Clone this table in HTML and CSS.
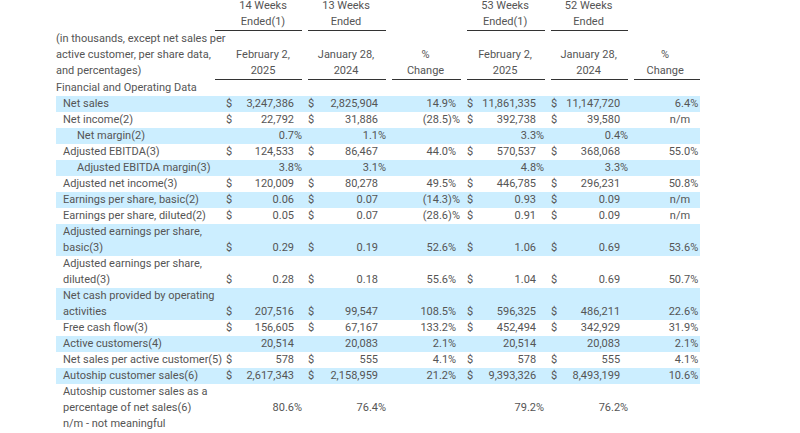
FILE: index.html
```html
<!DOCTYPE html>
<html>
<head>
<meta charset="utf-8">
<link rel="stylesheet" href="styles.css">
</head>
<body>
<div class="wrap">
<table class="fin">
  <colgroup>
    <col class="w-label">
    <col class="w-cur"><col class="w-v60"><col class="w-s10">
    <col class="w-cur"><col class="w-v62"><col class="w-s10">
    <col class="w-v60"><col class="w-s15">
    <col class="w-cur"><col class="w-v61"><col class="w-s11">
    <col class="w-cur"><col class="w-v61"><col class="w-s10">
    <col class="w-v60"><col class="w-s10">
  </colgroup>
  <tr>
    <td></td>
    <td colspan="3" class="hcell"><div class="htext">14 Weeks<br>Ended(1)</div><div class="hline first"></div></td>
    <td colspan="3" class="hcell"><div class="htext">13 Weeks<br>Ended</div><div class="hline"></div></td>
    <td colspan="2"></td>
    <td colspan="3" class="hcell"><div class="htext">53 Weeks<br>Ended(1)</div><div class="hline"></div></td>
    <td colspan="3" class="hcell"><div class="htext">52 Weeks<br>Ended</div><div class="hline"></div></td>
    <td colspan="2"></td>
  </tr>
  <tr>
    <td class="hlabel">(in thousands, except net sales per<br>active customer, per share data,<br>and percentages)</td>
    <td colspan="3" class="hcell"><div class="htext">February 2,<br>2025</div><div class="hline first"></div></td>
    <td colspan="3" class="hcell"><div class="htext">January 28,<br>2024</div><div class="hline"></div></td>
    <td colspan="2" class="hcell"><div class="htext">%<br>Change</div><div class="hline"></div></td>
    <td colspan="3" class="hcell"><div class="htext">February 2,<br>2025</div><div class="hline"></div></td>
    <td colspan="3" class="hcell"><div class="htext">January 28,<br>2024</div><div class="hline"></div></td>
    <td colspan="2" class="hcell"><div class="htext">%<br>Change</div><div class="hline last"></div></td>
  </tr>
  <tr>
    <td colspan="17" class="section">Financial and Operating Data</td>
  </tr>
  <tr class="band">
    <td class="lbl">Net sales</td>
    <td class="cur">$</td><td class="num">3,247,386</td><td class="suf"></td>
    <td class="cur">$</td><td class="num">2,825,904</td><td class="suf"></td>
    <td class="num">14.9</td><td class="suf">%</td>
    <td class="cur">$</td><td class="num">11,861,335</td><td class="suf"></td>
    <td class="cur">$</td><td class="num">11,147,720</td><td class="suf"></td>
    <td class="num">6.4</td><td class="suf">%</td>
  </tr>
  <tr>
    <td class="lbl">Net income(2)</td>
    <td class="cur">$</td><td class="num">22,792</td><td class="suf"></td>
    <td class="cur">$</td><td class="num">31,886</td><td class="suf"></td>
    <td class="num">(28.5</td><td class="suf">)%</td>
    <td class="cur">$</td><td class="num">392,738</td><td class="suf"></td>
    <td class="cur">$</td><td class="num">39,580</td><td class="suf"></td>
    <td class="num">n/m</td><td class="suf"></td>
  </tr>
  <tr class="band">
    <td class="lbl ind">Net margin(2)</td>
    <td class="cur"></td><td class="num">0.7</td><td class="suf">%</td>
    <td class="cur"></td><td class="num">1.1</td><td class="suf">%</td>
    <td class="num"></td><td class="suf"></td>
    <td class="cur"></td><td class="num">3.3</td><td class="suf">%</td>
    <td class="cur"></td><td class="num">0.4</td><td class="suf">%</td>
    <td class="num"></td><td class="suf"></td>
  </tr>
  <tr>
    <td class="lbl">Adjusted EBITDA(3)</td>
    <td class="cur">$</td><td class="num">124,533</td><td class="suf"></td>
    <td class="cur">$</td><td class="num">86,467</td><td class="suf"></td>
    <td class="num">44.0</td><td class="suf">%</td>
    <td class="cur">$</td><td class="num">570,537</td><td class="suf"></td>
    <td class="cur">$</td><td class="num">368,068</td><td class="suf"></td>
    <td class="num">55.0</td><td class="suf">%</td>
  </tr>
  <tr class="band">
    <td class="lbl ind">Adjusted EBITDA margin(3)</td>
    <td class="cur"></td><td class="num">3.8</td><td class="suf">%</td>
    <td class="cur"></td><td class="num">3.1</td><td class="suf">%</td>
    <td class="num"></td><td class="suf"></td>
    <td class="cur"></td><td class="num">4.8</td><td class="suf">%</td>
    <td class="cur"></td><td class="num">3.3</td><td class="suf">%</td>
    <td class="num"></td><td class="suf"></td>
  </tr>
  <tr>
    <td class="lbl">Adjusted net income(3)</td>
    <td class="cur">$</td><td class="num">120,009</td><td class="suf"></td>
    <td class="cur">$</td><td class="num">80,278</td><td class="suf"></td>
    <td class="num">49.5</td><td class="suf">%</td>
    <td class="cur">$</td><td class="num">446,785</td><td class="suf"></td>
    <td class="cur">$</td><td class="num">296,231</td><td class="suf"></td>
    <td class="num">50.8</td><td class="suf">%</td>
  </tr>
  <tr class="band">
    <td class="lbl">Earnings per share, basic(2)</td>
    <td class="cur">$</td><td class="num">0.06</td><td class="suf"></td>
    <td class="cur">$</td><td class="num">0.07</td><td class="suf"></td>
    <td class="num">(14.3</td><td class="suf">)%</td>
    <td class="cur">$</td><td class="num">0.93</td><td class="suf"></td>
    <td class="cur">$</td><td class="num">0.09</td><td class="suf"></td>
    <td class="num">n/m</td><td class="suf"></td>
  </tr>
  <tr>
    <td class="lbl">Earnings per share, diluted(2)</td>
    <td class="cur">$</td><td class="num">0.05</td><td class="suf"></td>
    <td class="cur">$</td><td class="num">0.07</td><td class="suf"></td>
    <td class="num">(28.6</td><td class="suf">)%</td>
    <td class="cur">$</td><td class="num">0.91</td><td class="suf"></td>
    <td class="cur">$</td><td class="num">0.09</td><td class="suf"></td>
    <td class="num">n/m</td><td class="suf"></td>
  </tr>
  <tr class="band">
    <td class="lbl">Adjusted earnings per share,<br>basic(3)</td>
    <td class="cur">$</td><td class="num">0.29</td><td class="suf"></td>
    <td class="cur">$</td><td class="num">0.19</td><td class="suf"></td>
    <td class="num">52.6</td><td class="suf">%</td>
    <td class="cur">$</td><td class="num">1.06</td><td class="suf"></td>
    <td class="cur">$</td><td class="num">0.69</td><td class="suf"></td>
    <td class="num">53.6</td><td class="suf">%</td>
  </tr>
  <tr>
    <td class="lbl">Adjusted earnings per share,<br>diluted(3)</td>
    <td class="cur">$</td><td class="num">0.28</td><td class="suf"></td>
    <td class="cur">$</td><td class="num">0.18</td><td class="suf"></td>
    <td class="num">55.6</td><td class="suf">%</td>
    <td class="cur">$</td><td class="num">1.04</td><td class="suf"></td>
    <td class="cur">$</td><td class="num">0.69</td><td class="suf"></td>
    <td class="num">50.7</td><td class="suf">%</td>
  </tr>
  <tr class="band">
    <td class="lbl">Net cash provided by operating<br>activities</td>
    <td class="cur">$</td><td class="num">207,516</td><td class="suf"></td>
    <td class="cur">$</td><td class="num">99,547</td><td class="suf"></td>
    <td class="num">108.5</td><td class="suf">%</td>
    <td class="cur">$</td><td class="num">596,325</td><td class="suf"></td>
    <td class="cur">$</td><td class="num">486,211</td><td class="suf"></td>
    <td class="num">22.6</td><td class="suf">%</td>
  </tr>
  <tr>
    <td class="lbl">Free cash flow(3)</td>
    <td class="cur">$</td><td class="num">156,605</td><td class="suf"></td>
    <td class="cur">$</td><td class="num">67,167</td><td class="suf"></td>
    <td class="num">133.2</td><td class="suf">%</td>
    <td class="cur">$</td><td class="num">452,494</td><td class="suf"></td>
    <td class="cur">$</td><td class="num">342,929</td><td class="suf"></td>
    <td class="num">31.9</td><td class="suf">%</td>
  </tr>
  <tr class="band">
    <td class="lbl">Active customers(4)</td>
    <td class="cur"></td><td class="num">20,514</td><td class="suf"></td>
    <td class="cur"></td><td class="num">20,083</td><td class="suf"></td>
    <td class="num">2.1</td><td class="suf">%</td>
    <td class="cur"></td><td class="num">20,514</td><td class="suf"></td>
    <td class="cur"></td><td class="num">20,083</td><td class="suf"></td>
    <td class="num">2.1</td><td class="suf">%</td>
  </tr>
  <tr>
    <td class="lbl">Net sales per active customer(5)</td>
    <td class="cur">$</td><td class="num">578</td><td class="suf"></td>
    <td class="cur">$</td><td class="num">555</td><td class="suf"></td>
    <td class="num">4.1</td><td class="suf">%</td>
    <td class="cur">$</td><td class="num">578</td><td class="suf"></td>
    <td class="cur">$</td><td class="num">555</td><td class="suf"></td>
    <td class="num">4.1</td><td class="suf">%</td>
  </tr>
  <tr class="band">
    <td class="lbl">Autoship customer sales(6)</td>
    <td class="cur">$</td><td class="num">2,617,343</td><td class="suf"></td>
    <td class="cur">$</td><td class="num">2,158,959</td><td class="suf"></td>
    <td class="num">21.2</td><td class="suf">%</td>
    <td class="cur">$</td><td class="num">9,393,326</td><td class="suf"></td>
    <td class="cur">$</td><td class="num">8,493,199</td><td class="suf"></td>
    <td class="num">10.6</td><td class="suf">%</td>
  </tr>
  <tr>
    <td class="lbl">Autoship customer sales as a<br>percentage of net sales(6)</td>
    <td class="cur"></td><td class="num">80.6</td><td class="suf">%</td>
    <td class="cur"></td><td class="num">76.4</td><td class="suf">%</td>
    <td class="num"></td><td class="suf"></td>
    <td class="cur"></td><td class="num">79.2</td><td class="suf">%</td>
    <td class="cur"></td><td class="num">76.2</td><td class="suf">%</td>
    <td class="num"></td><td class="suf"></td>
  </tr>
  <tr>
    <td colspan="17" class="lbl">n/m - not meaningful</td>
  </tr>
</table>
</div>
</body>
</html>
```

FILE: styles.css
```css
html, body {
  margin: 0;
  padding: 0;
  background: #ffffff;
}

body {
  font-family: Roboto, "Liberation Sans", sans-serif;
  font-size: 11px;
  line-height: 16px;
  color: #555555;
}

.wrap {
  padding-left: 56px;
}

.fin {
  border-collapse: separate;
  border-spacing: 0;
  table-layout: fixed;
  width: 644px;
  margin-top: -2px;
}

.w-label { width: 166px; }
.w-cur { width: 12px; }
.w-v60 { width: 60px; }
.w-v61 { width: 61px; }
.w-v62 { width: 62px; }
.w-s10 { width: 10px; }
.w-s11 { width: 11px; }
.w-s15 { width: 15px; }

.fin td {
  padding: 0;
  vertical-align: bottom;
  white-space: nowrap;
}

.hcell {
  text-align: center;
}

.htext {
  text-align: center;
}

.hline {
  border-top: 1px solid #333333;
  margin: 0 2px 0 4px;
  height: 0;
}

.hline.first {
  margin-left: -7px;
}

.hline.last {
  margin-right: 0;
}

.fin td.hlabel {
  padding-bottom: 1px;
  text-align: left;
}

.section {
  text-align: left;
}

.band td {
  background: #cceeff;
}

.fin td.lbl {
  padding-left: 7px;
  text-align: left;
}

.fin td.lbl.ind {
  padding-left: 21px;
}

.fin td.cur {
  padding-left: 4px;
  text-align: left;
}

.num {
  text-align: right;
}

.suf {
  text-align: left;
  overflow: visible;
}
```
